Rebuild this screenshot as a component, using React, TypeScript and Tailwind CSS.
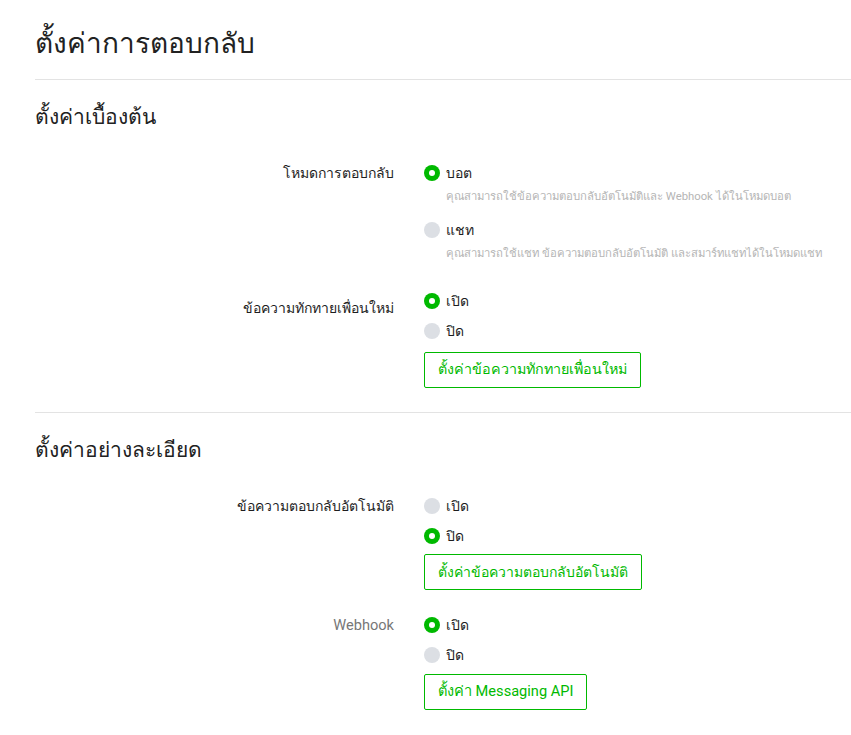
import React from "react";

const font = { fontFamily: 'Roboto, "Noto Sans", "DejaVu Sans", sans-serif' };

function Radio({ checked }: { checked: boolean }) {
  return checked ? (
    <span className="inline-flex h-4 w-4 shrink-0 items-center justify-center rounded-full bg-[#00b900]">
      <span className="h-[6px] w-[6px] rounded-full bg-white" />
    </span>
  ) : (
    <span className="inline-block h-4 w-4 shrink-0 rounded-full bg-[#dcdfe4]" />
  );
}

function Option({ checked, label, desc }: { checked: boolean; label: string; desc?: string }) {
  return (
    <div className="flex flex-col">
      <div className="flex h-[24px] items-center gap-[6px]">
        <Radio checked={checked} />
        <span className="text-[14px] text-[#1e1e1e]">{label}</span>
      </div>
      {desc && <div className="ml-[22px] mt-[4px] text-[11.3px] leading-[16px] text-[#b5b5b5]">{desc}</div>}
    </div>
  );
}

function Row({ label, labelClass, children }: { label: string; labelClass?: string; children: React.ReactNode }) {
  return (
    <div className="flex">
      <div className={"w-[359px] shrink-0 text-right leading-[20px] " + (labelClass ?? "pt-[2px] text-[14px] text-[#1e1e1e]")}>{label}</div>
      <div className="ml-[30px] flex flex-col">{children}</div>
    </div>
  );
}

function Btn({ children, cls }: { children: React.ReactNode; cls: string }) {
  return (
    <div className={cls + " self-start border border-[#00b900] rounded-[2px] h-[36px] flex items-center text-[#00b900] bg-white"}>
      {children}
    </div>
  );
}

export default function App() {
  return (
    <div className="min-h-[735px] w-[851px] bg-white pl-[35px]" style={font}>
      <h1 className="pt-[26px] pb-[17px] text-[28px] leading-[36px] text-[#222]">ตั้งค่าการตอบกลับ</h1>
      <div className="h-px bg-[#e3e3e3]" />
      <h2 className="pt-[23px] text-[21px] leading-[28px] text-[#222]">ตั้งค่าเบื้องต้น</h2>
      <div className="mt-[30px] flex flex-col gap-[27px] pb-[24px]">
        <Row label="โหมดการตอบกลับ">
          <div className="flex flex-col gap-[13px]">
            <Option checked label="บอต" desc="คุณสามารถใช้ข้อความตอบกลับอัตโนมัติและ Webhook ได้ในโหมดบอต" />
            <Option checked={false} label="แชท" desc="คุณสามารถใช้แชท ข้อความตอบกลับอัตโนมัติ และสมาร์ทแชทได้ในโหมดแชท" />
          </div>
        </Row>
        <Row label="ข้อความทักทายเพื่อนใหม่" labelClass="pt-[9px] text-[14px] text-[#1e1e1e]">
          <div className="flex flex-col gap-[6px]">
            <Option checked label="เปิด" />
            <Option checked={false} label="ปิด" />
          </div>
          <Btn cls="mt-[9px] px-[13px] text-[14.3px]">ตั้งค่าข้อความทักทายเพื่อนใหม่</Btn>
        </Row>
      </div>
      <div className="h-px bg-[#e3e3e3]" />
      <h2 className="pt-[23px] text-[21px] leading-[28px] text-[#222]">ตั้งค่าอย่างละเอียด</h2>
      <div className="mt-[30px] flex flex-col gap-[23px] pb-[24px]">
        <Row label="ข้อความตอบกลับอัตโนมัติ">
          <div className="flex flex-col gap-[6px]">
            <Option checked={false} label="เปิด" />
            <Option checked label="ปิด" />
          </div>
          <Btn cls="mt-[6px] px-[13px] text-[14px]">ตั้งค่าข้อความตอบกลับอัตโนมัติ</Btn>
        </Row>
        <Row label="Webhook" labelClass="pt-[2px] text-[14.6px] text-[#777]">
          <div className="flex flex-col gap-[6px]">
            <Option checked label="เปิด" />
            <Option checked={false} label="ปิด" />
          </div>
          <Btn cls="mt-[7px] px-[13px] text-[14.6px]">ตั้งค่า Messaging API</Btn>
        </Row>
      </div>
    </div>
  );
}
